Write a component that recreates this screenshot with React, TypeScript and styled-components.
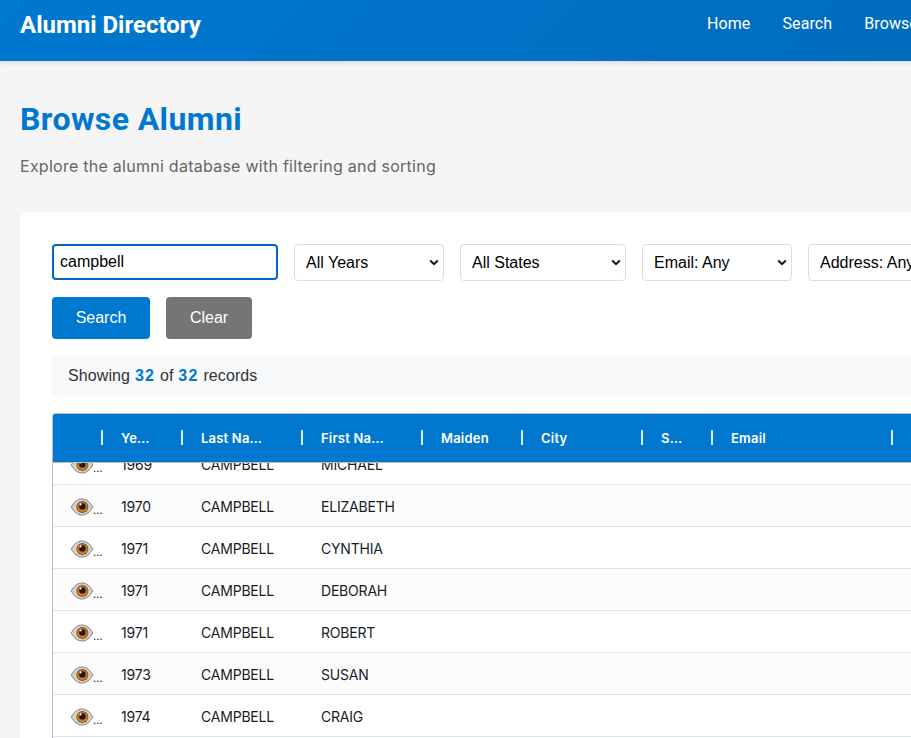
import React from 'react';
import styled, { createGlobalStyle } from 'styled-components';

const GlobalStyle = createGlobalStyle`
  html, body {
    margin: 0;
    padding: 0;
    height: 738px;
    overflow: hidden;
    background: #f5f5f5;
  }
  * {
    box-sizing: border-box;
  }
`;

const BASE_FONT = `Inter, 'Liberation Sans', sans-serif`;
const DISPLAY_FONT = `Roboto, Inter, sans-serif`;
const FORM_FONT = `'Liberation Sans', Arial, sans-serif`;
const PRIMARY = '#0078d0';

const CHEVRON =
  "data:image/svg+xml,%3Csvg xmlns='http://www.w3.org/2000/svg' width='10' height='7' viewBox='0 0 10 7'%3E%3Cpath d='M1.2 1.5 5 5.2l3.8-3.7' fill='none' stroke='%23111' stroke-width='2'/%3E%3C/svg%3E";

const COLUMNS = [
  { label: '', width: 50 },
  { label: 'Ye…', width: 80 },
  { label: 'Last Na…', width: 120 },
  { label: 'First Na…', width: 120 },
  { label: 'Maiden', width: 100 },
  { label: 'City', width: 120 },
  { label: 'S…', width: 70 },
  { label: 'Email', width: 180 },
  { label: '', width: 180 }
];

const RECORDS = [
  { year: '1969', last: 'CAMPBELL', first: 'MICHAEL' },
  { year: '1970', last: 'CAMPBELL', first: 'ELIZABETH' },
  { year: '1971', last: 'CAMPBELL', first: 'CYNTHIA' },
  { year: '1971', last: 'CAMPBELL', first: 'DEBORAH' },
  { year: '1971', last: 'CAMPBELL', first: 'ROBERT' },
  { year: '1973', last: 'CAMPBELL', first: 'SUSAN' },
  { year: '1974', last: 'CAMPBELL', first: 'CRAIG' }
];

const EyeIcon = () => (
  <svg width="22" height="18" viewBox="0 0 22 18" aria-hidden="true">
    <path
      d="M0.3 9C3 4 6.5 1 11 1s8 3 10.7 8c-2.7 5-6.2 8-10.7 8S3 14 0.3 9Z"
      fill="#d6d0cd"
      stroke="#7d7673"
      strokeWidth="0.9"
    />
    <circle cx="11.4" cy="9" r="6" fill="#8a5a22" />
    <circle cx="11.4" cy="9.2" r="4.9" fill="#c77f1e" />
    <circle cx="11.4" cy="8.4" r="3.2" fill="#26160f" />
    <circle cx="9.6" cy="6.4" r="1.1" fill="#f2eeea" />
  </svg>
);

const App = () => (
  <>
    <GlobalStyle />
    <Page>
      <Header>
        <Brand>Alumni Directory</Brand>
        <Nav>
          <NavLink href="#">Home</NavLink>
          <NavLink href="#">Search</NavLink>
          <NavLink href="#">Browse</NavLink>
        </Nav>
      </Header>

      <Main>
        <Title>Browse Alumni</Title>
        <Subtitle>Explore the alumni database with filtering and sorting</Subtitle>

        <Card>
          <Filters>
            <SearchInput defaultValue="campbell" autoComplete="off" />
            <Select width={150} defaultValue="years">
              <option value="years">All Years</option>
            </Select>
            <Select width={166} defaultValue="states">
              <option value="states">All States</option>
            </Select>
            <Select width={150} defaultValue="email">
              <option value="email">Email: Any</option>
            </Select>
            <Select width={166} defaultValue="address">
              <option value="address">Address: Any</option>
            </Select>
          </Filters>

          <Actions>
            <Button $variant="primary" $width={98}>Search</Button>
            <Button $variant="muted" $width={86}>Clear</Button>
          </Actions>

          <Stats>
            Showing <strong>32</strong> of <strong>32</strong> records
          </Stats>

          <Grid>
            <HeaderRow>
              {COLUMNS.map((col, i) => (
                <HeaderCell key={i} $width={col.width}>
                  {col.label}
                </HeaderCell>
              ))}
            </HeaderRow>
            <GridBody>
              {RECORDS.map((rec, i) => (
                <Row key={`${rec.first}-${i}`} $alt={i % 2 === 1}>
                  <Cell $width={COLUMNS[0].width}>
                    <EyeIcon />
                    <Dots>…</Dots>
                  </Cell>
                  <Cell $width={COLUMNS[1].width}>{rec.year}</Cell>
                  <Cell $width={COLUMNS[2].width}>{rec.last}</Cell>
                  <Cell $width={COLUMNS[3].width}>{rec.first}</Cell>
                </Row>
              ))}
            </GridBody>
          </Grid>
        </Card>
      </Main>
    </Page>
  </>
);

export default App;

const Page = styled.div`
  width: 1240px;
  font-family: ${BASE_FONT};
  color: #333;
`;

const Header = styled.header`
  display: flex;
  height: 61px;
  padding: 8px 0 0 20px;
  background: linear-gradient(135deg, #0078d0, #0068b8);
  box-shadow: 0 2px 4px rgba(0, 0, 0, 0.1);
`;

const Brand = styled.div`
  flex: 0 0 687px;
  font-family: ${DISPLAY_FONT};
  font-size: 24px;
  line-height: 34px;
  font-weight: 700;
  color: #fff;
`;

const Nav = styled.nav`
  display: flex;
  gap: 32px;
`;

const NavLink = styled.a`
  font-family: ${DISPLAY_FONT};
  font-size: 16px;
  line-height: 32px;
  font-weight: 400;
  letter-spacing: 0.1px;
  color: #fff;
  text-decoration: none;
`;

const Main = styled.main`
  padding: 40px 20px 0;
`;

const Title = styled.h1`
  margin: 0;
  font-family: ${DISPLAY_FONT};
  font-size: 32px;
  line-height: 36px;
  font-weight: 700;
  letter-spacing: 0.4px;
  color: ${PRIMARY};
`;

const Subtitle = styled.p`
  margin: 17px 0 0;
  font-size: 16px;
  line-height: 24px;
  letter-spacing: 0.26px;
  color: #666;
`;

const Card = styled.section`
  margin-top: 34px;
  padding: 32px;
  background: #fff;
  border-radius: 8px;
  box-shadow: 0 1px 3px rgba(0, 0, 0, 0.03);
`;

const Filters = styled.div`
  display: flex;
  align-items: flex-start;
  gap: 16px;
`;

const SearchInput = styled.input`
  width: 226px;
  height: 36px;
  padding: 0 6px;
  border: 2px solid #0066cc;
  border-radius: 4px;
  outline: none;
  font-family: ${FORM_FONT};
  font-size: 16px;
  color: #000;
`;

const Select = styled.select<{ width: number }>`
  appearance: none;
  width: ${({ width }) => width}px;
  height: 37px;
  padding: 0 11px;
  border: 1px solid #ddd;
  border-radius: 4px;
  background: #fff url("${CHEVRON}") no-repeat right 4px center;
  font-family: ${FORM_FONT};
  font-size: 16px;
  color: #000;
`;

const Actions = styled.div`
  display: flex;
  gap: 16px;
  margin-top: 16px;
`;

const Button = styled.button<{ $variant: 'primary' | 'muted'; $width: number }>`
  width: ${({ $width }) => $width}px;
  height: 42px;
  padding: 0 0 1px;
  border: 0;
  border-radius: 4px;
  background: ${({ $variant }) => ($variant === 'primary' ? PRIMARY : '#757575')};
  font-family: ${FORM_FONT};
  font-size: 16px;
  color: #fff;
`;

const Stats = styled.div`
  margin-top: 16px;
  padding: 0 16px;
  height: 42px;
  line-height: 41px;
  font-family: ${FORM_FONT};
  font-size: 16px;
  letter-spacing: 0.1px;
  word-spacing: 0.3px;
  background: #f8f9fa;
  border-radius: 4px;
  color: #333;

  strong {
    font-weight: 700;
    letter-spacing: 1.2px;
    color: ${PRIMARY};
  }
`;

const Grid = styled.div`
  margin-top: 16px;
  height: 500px;
  overflow: hidden;
  border: 1px solid #babfc7;
  border-radius: 3px 3px 0 0;
`;

const HeaderRow = styled.div`
  position: relative;
  z-index: 1;
  display: flex;
  height: 49px;
  background: ${PRIMARY};
  border-bottom: 1px solid #babfc7;
`;

const HeaderCell = styled.div<{ $width: number }>`
  position: relative;
  flex: 0 0 ${({ $width }) => $width}px;
  padding-left: 18px;
  font-size: 13px;
  line-height: 48px;
  font-weight: 600;
  letter-spacing: 0.2px;
  color: #fff;

  &::after {
    content: '';
    position: absolute;
    right: 0;
    top: 16px;
    width: 2px;
    height: 15px;
    background: rgba(255, 255, 255, 0.85);
  }
`;

const GridBody = styled.div`
  margin-top: -20px;
`;

const Row = styled.div<{ $alt: boolean }>`
  display: flex;
  height: 42px;
  background: ${({ $alt }) => ($alt ? '#fcfcfd' : '#fff')};
  border-bottom: 1px solid #dde2eb;
`;

const Cell = styled.div<{ $width: number }>`
  display: flex;
  align-items: center;
  flex: 0 0 ${({ $width }) => $width}px;
  padding: 2px 0 0 18px;
  font-size: 14px;
  letter-spacing: -0.2px;
  color: #181d1f;
`;

const Dots = styled.span`
  font-size: 11px;
  line-height: 1;
  margin-top: 8px;
  letter-spacing: -0.5px;
`;
